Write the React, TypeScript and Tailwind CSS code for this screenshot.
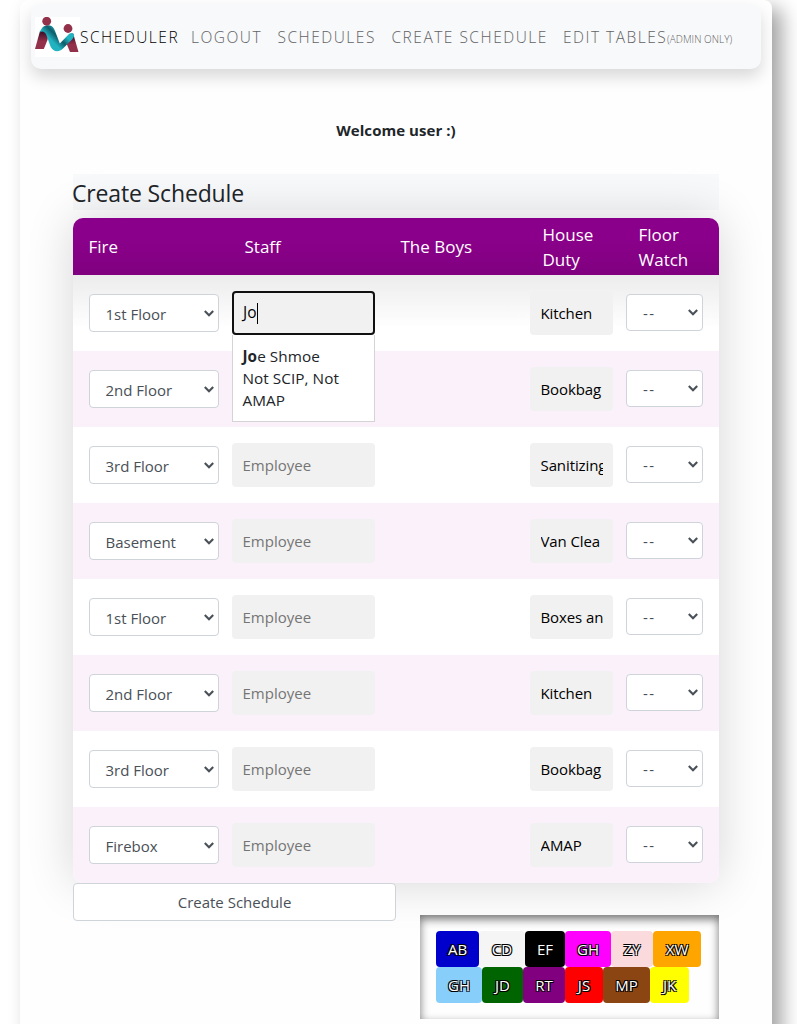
import type { ReactNode } from "react";

const rows = [
  { fire: "1st Floor", duty: "Kitchen" },
  { fire: "2nd Floor", duty: "Bookbag" },
  { fire: "3rd Floor", duty: "Sanitizing" },
  { fire: "Basement", duty: "Van Clea" },
  { fire: "1st Floor", duty: "Boxes an" },
  { fire: "2nd Floor", duty: "Kitchen" },
  { fire: "3rd Floor", duty: "Bookbag" },
  { fire: "Firebox", duty: "AMAP" },
];

const staff = [
  [
    { name: "AB", look: "w-[43px] bg-[#0000cd]" },
    { name: "CD", look: "w-[46px] bg-[#f5f5f5]" },
    { name: "EF", look: "w-[40px] bg-black" },
    { name: "GH", look: "w-[46px] bg-[#ff00ff]" },
    { name: "ZY", look: "w-[42px] bg-[#fadadd]" },
    { name: "XW", look: "w-[48px] bg-[#ffa500]" },
  ],
  [
    { name: "GH", look: "w-[46px] bg-[#87cefa]" },
    { name: "JD", look: "w-[41px] bg-[#006400]" },
    { name: "RT", look: "w-[42px] bg-[#800080]" },
    { name: "JS", look: "w-[38px] bg-[#ff0000]" },
    { name: "MP", look: "w-[47px] bg-[#8b4513]" },
    { name: "JK", look: "w-[39px] bg-[#ffff00]" },
  ],
];

function Logo() {
  return (
    <svg viewBox="0 0 45 40" className="h-10 w-[45px] shrink-0 bg-white">
      <defs>
        <linearGradient id="leg" x1="0" y1="0" x2="0" y2="1">
          <stop offset="0.1" stopColor="#3d1029" />
          <stop offset="0.6" stopColor="#93304a" />
        </linearGradient>
        <linearGradient id="ribbon" gradientUnits="userSpaceOnUse" x1="22" y1="32" x2="37" y2="17">
          <stop offset="0.1" stopColor="#22b3c1" />
          <stop offset="0.42" stopColor="#0d5c69" />
          <stop offset="0.72" stopColor="#22b3c1" />
        </linearGradient>
      </defs>
      <path d="M0 32 L5 14 L14 13 L12.5 23 L8.8 32Z" fill="url(#leg)" />
      <path d="M30.5 24 L38 16 L43.5 35 H35Z" fill="url(#leg)" />
      <path
        d="M5 15.5C6 10.5 9.5 8 13.5 8.2C18 8.5 19.5 12 20.8 16L24.8 26.5L34 17C36.5 14.8 39 16.2 39 18.6C39 20.3 37.8 21.7 36.5 23L28 31.5C23.5 36 18 34.8 15.5 29.5L11.8 19C10.5 14.5 7 13.2 5 15.5Z"
        fill="url(#ribbon)"
      />
      <circle cx="11.7" cy="4.2" r="4.4" fill="#93304a" />
      <circle cx="33" cy="11.5" r="4.4" fill="#93304a" />
    </svg>
  );
}

function Chevron() {
  return (
    <svg viewBox="0 0 10 7" className="h-[7px] w-[10px]" fill="none" stroke="#495057" strokeWidth="2.1">
      <path d="M0.8 1.1L5 5.3L9.2 1.1" />
    </svg>
  );
}

function Field({ children }: { children?: ReactNode }) {
  return (
    <div className="mt-4 h-11 overflow-hidden rounded bg-[#f1f1f1] px-[10.5px] leading-[44px] whitespace-nowrap">
      {children}
    </div>
  );
}

function StaffActive() {
  return (
    <div className="relative">
      <div className="mt-4 flex h-11 items-center rounded border-2 border-[#101010] bg-[#f1f1f1] pl-[9px] text-[15.5px] text-black">
        Jo
        <span className="h-[21px] w-px bg-black" />
      </div>
      <div className="absolute top-[60px] left-0 z-10 h-[87px] w-full border border-t-0 border-[#d4d4d4] bg-white pt-[10px] pl-[9.5px] text-[15.3px] leading-[22px] tracking-[0.05px]">
        <p>
          <b>Jo</b>e Shmoe
        </p>
        <p>
          Not SCIP, Not
          <br />
          AMAP
        </p>
      </div>
    </div>
  );
}

export default function App() {
  return (
    <div className="h-[1024px] w-[797px] overflow-hidden bg-white pl-5 font-['Open_Sans','Noto_Sans',sans-serif] text-[15px] text-[#212529]">
      <main className="h-[1100px] w-[752px] rounded-t-lg bg-[#fefefe] shadow-[10px_8px_20px_rgba(0,0,0,0.36)]">
        <div className="pt-1 pl-[11px]">
          <nav className="flex h-[65px] w-[730px] items-center rounded-[10px] bg-[#f8f9fa] pl-1 text-[15.5px] font-light tracking-[1.5px] text-[#626264] shadow-[0_8px_16px_rgba(0,0,0,0.15)]">
            <Logo />
            <span className="w-[111px] pt-[3px] whitespace-nowrap text-black">SCHEDULER</span>
            <span className="w-[86.5px] pt-[3px] whitespace-nowrap">LOGOUT</span>
            <span className="w-[114px] pt-[3px] whitespace-nowrap">SCHEDULES</span>
            <span className="w-[171.5px] pt-[3px] whitespace-nowrap">CREATE SCHEDULE</span>
            <span className="w-[104px] pt-[3px] whitespace-nowrap">EDIT TABLES</span>
            <span className="pt-[6px] text-[10px] tracking-[0.05px] whitespace-nowrap">(ADMIN ONLY)</span>
          </nav>
        </div>

        <p className="mt-[49px] text-center text-[15px] leading-6 font-bold tracking-[0.05px]">Welcome user :)</p>

        <section className="ml-[53px] w-[646px] pt-8">
          <h1 className="-indent-px h-9 bg-[#f8f9fa] text-[23px] leading-[38px] tracking-[-0.15px]">
            Create Schedule
          </h1>

          <div className="relative mt-2 rounded-[10px] shadow-[0_0_48px_rgba(0,0,0,0.16)]">
            <div className="flex h-[57px] items-center rounded-t-[10px] bg-linear-to-b from-[#8b008b] from-30% to-[#800080] pl-[15.5px] text-[17px] leading-[25px] text-white">
              <span className="w-[156px]">Fire</span>
              <span className="w-[156px]">Staff</span>
              <span className="w-[142px]">The Boys</span>
              <span className="w-24">
                House
                <br />
                Duty
              </span>
              <span>
                Floor
                <br />
                Watch
              </span>
            </div>
            {rows.map((row, i) => (
              <div
                key={i}
                className={
                  "grid h-[76px] grid-cols-[130px_143px_129px_83px_77px] gap-x-[13px] pl-4 last:rounded-b-[10px] " +
                  (i === 0
                    ? "bg-linear-to-b from-[#ececec] to-white to-70%"
                    : i % 2
                      ? "bg-[#fbf1fa]"
                      : "bg-white")
                }
              >
                <div className="mt-[19px] flex h-[38px] items-center justify-between rounded border border-[#ced4da] bg-white pr-1 pl-[15.5px] text-[#495057]">
                  <span className="pt-[3px]">{row.fire}</span>
                  <Chevron />
                </div>
                {i === 0 ? (
                  <StaffActive />
                ) : (
                  <Field>{i > 1 && <span className="text-[#757575]">Employee</span>}</Field>
                )}
                <div />
                <Field>
                  <div className="overflow-hidden tracking-[-0.1px] text-black">{row.duty}</div>
                </Field>
                <div className="mt-[19px] flex h-[37px] items-center justify-between rounded border border-[#ced4da] bg-white pr-1 pl-4 text-[#495057]">
                  <span className="pt-[2px] tracking-[1.4px]">--</span>
                  <Chevron />
                </div>
              </div>
            ))}
          </div>

          <div className="relative flex items-start justify-between">
            <button className="h-[38px] w-[323px] rounded border border-[#ced4da] bg-white text-[#495057]">
              Create Schedule
            </button>
            <div className="mt-8 h-[104px] w-[299px] p-4 shadow-[inset_0_4px_10px_rgba(0,0,0,0.55)]">
              {staff.map((line, i) => (
                <div key={i} className="flex">
                  {line.map((person) => (
                    <span
                      key={person.name}
                      className={
                        "h-9 rounded text-center leading-[37px] text-white [text-shadow:-1px_-1px_0_#000,1px_-1px_0_#000,-1px_1px_0_#000,1px_1px_0_#000] " +
                        person.look
                      }
                    >
                      {person.name}
                    </span>
                  ))}
                </div>
              ))}
            </div>
          </div>
        </section>
      </main>
    </div>
  );
}
